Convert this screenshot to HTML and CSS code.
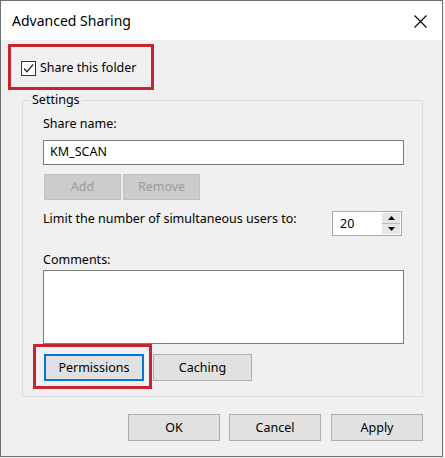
FILE: index.html
```html
<!DOCTYPE html>
<html lang="en">
<head>
<meta charset="utf-8">
<title>Advanced Sharing</title>
<link rel="stylesheet" href="styles.css">
</head>
<body>
<div class="window">
  <div class="titlebar">
    <span class="title">Advanced Sharing</span>
    <svg class="close" width="13" height="13" viewBox="0 0 13 13"><path d="M0.5 0.5L12.5 12.5M12.5 0.5L0.5 12.5" stroke="#000" stroke-width="1.1" fill="none"/></svg>
  </div>
  <div class="content">
    <div class="hl hl-share">
      <label class="check">
        <span class="box"><svg width="13" height="13" viewBox="0 0 13 13"><path d="M2 6.5L5 9.8L11 2.5" stroke="#222" stroke-width="1.3" fill="none"/></svg></span>
        <span>Share this folder</span>
      </label>
    </div>
    <fieldset class="group">
      <legend>Settings</legend>
      <div class="group-inner">
        <div class="label">Share name:</div>
        <div class="textbox">KM_SCAN</div>
        <div class="btn-row">
          <button class="btn btn-small" disabled>Add</button>
          <button class="btn btn-small btn-remove" disabled>Remove</button>
        </div>
        <div class="limit-row">
          <span class="limit-label">Limit the number of simultaneous users to:</span>
          <div class="spin">
            <div class="spin-value">20</div>
            <div class="spin-arrows">
              <div class="arrow arrow-up"><svg width="7" height="4" viewBox="0 0 7 4"><path d="M3.5 0L7 4H0Z" fill="#000"/></svg></div>
              <div class="arrow arrow-down"><svg width="7" height="4" viewBox="0 0 7 4"><path d="M0 0H7L3.5 4Z" fill="#000"/></svg></div>
            </div>
          </div>
        </div>
        <div class="label label-comments">Comments:</div>
        <div class="textarea"></div>
        <div class="perm-row">
          <div class="hl hl-perm">
            <button class="btn btn-perm">Permissions</button>
          </div>
          <button class="btn btn-caching">Caching</button>
        </div>
      </div>
    </fieldset>
    <div class="footer">
      <button class="btn btn-foot">OK</button>
      <button class="btn btn-foot btn-cancel">Cancel</button>
      <button class="btn btn-foot btn-apply">Apply</button>
    </div>
  </div>
</div>
</body>
</html>
```
FILE: styles.css
```css
* { box-sizing: border-box; }
html, body {
  margin: 0;
  padding: 0;
  background: #f4f4f4;
  width: 445px;
  height: 458px;
  overflow: hidden;
}
body {
  font-family: "Noto Sans", "Open Sans", sans-serif;
  font-size: 12.5px;
  color: #000;
}
.window {
  width: 443px;
  height: 457px;
  border: 1px solid #6f6f6f;
  background: #f0f0f0;
  display: flex;
  flex-direction: column;
}
.titlebar {
  height: 39px;
  background: #fff;
  display: flex;
  align-items: center;
  padding-left: 11px;
  flex: none;
}
.title {
  font-size: 14px;
  line-height: 18px;
  margin-top: 1px;
}
.close {
  margin-left: auto;
  margin-right: 15px;
  margin-top: 2px;
}
.content {
  flex: 1;
  display: flex;
  flex-direction: column;
  align-items: flex-start;
}
.hl {
  border: 3px solid #c9232d;
}
.hl-share {
  margin: 4px 0 0 7px;
  width: 146px;
  height: 46px;
  display: flex;
  align-items: center;
  padding: 2px 0 0 10px;
}
.check {
  display: flex;
  align-items: center;
  line-height: 16px;
}
.box {
  width: 15px;
  height: 15px;
  border: 1px solid #333;
  background: #fff;
  display: flex;
  align-items: center;
  justify-content: center;
  margin-right: 4px;
}
.group {
  margin: 2px 0 0 21px;
  width: 401px;
  border: 1px solid #dcdcdc;
  padding: 0;
  min-width: 0;
}
.group legend {
  margin-left: 7px;
  padding: 0 2px;
  line-height: 16px;
  font-size: 12.5px;
}
.group-inner {
  padding: 8px 0 7px 20px;
  display: flex;
  flex-direction: column;
  align-items: flex-start;
}
.label {
  line-height: 16px;
}
.textbox {
  margin-top: 8px;
  width: 361px;
  height: 25px;
  border: 1px solid #7a7a7a;
  background: #fff;
  padding-left: 6px;
  line-height: 22px;
}
.btn {
  font-family: inherit;
  font-size: 12.5px;
  color: #000;
  background: #e1e1e1;
  border: 1px solid #adadad;
  padding: 0;
  margin: 0;
  line-height: 16px;
}
.btn-row {
  margin-top: 9px;
  display: flex;
}
.btn-small {
  width: 77px;
  height: 26px;
  margin-left: 1px;
}
.btn-small:disabled {
  background: #cccccc;
  border-color: #bfbfbf;
  color: #9b9b9b;
}
.btn-remove {
  margin-left: 2px;
}
.limit-row {
  margin-top: 11px;
  display: flex;
  align-items: flex-start;
}
.limit-label {
  width: 289px;
  line-height: 16px;
  margin-top: 0;
}
.spin {
  width: 70px;
  height: 25px;
  border: 1px solid #a9a9a9;
  background: #fff;
  display: flex;
}
.spin-value {
  flex: 1;
  padding-left: 7px;
  line-height: 23px;
}
.spin-arrows {
  width: 19px;
  display: flex;
  flex-direction: column;
  padding: 1px 1px 1px 0;
}
.arrow {
  flex: 1;
  background: #e6e6e6;
  display: flex;
  align-items: center;
  justify-content: center;
}
.arrow-up {
  border-bottom: 1px solid #bcbcbc;
}
.label-comments {
  margin-top: 16px;
}
.textarea {
  margin-top: 2px;
  width: 361px;
  height: 74px;
  border: 1px solid #7a7a7a;
  background: #fff;
}
.perm-row {
  display: flex;
  align-items: flex-start;
  margin-left: -10px;
}
.hl-perm {
  width: 119px;
  height: 45px;
  padding: 7px 0 0 8px;
}
.btn-perm {
  width: 100px;
  height: 27px;
  border: 2px solid #0078d7;
}
.btn-caching {
  width: 99px;
  height: 27px;
  margin: 10px 0 0 1px;
}
.footer {
  margin-top: 17px;
  display: flex;
  align-self: stretch;
  justify-content: flex-end;
  padding-right: 19px;
}
.btn-foot {
  width: 92px;
  height: 27px;
}
.btn-cancel {
  margin-left: 9px;
}
.btn-apply {
  margin-left: 10px;
}
```
